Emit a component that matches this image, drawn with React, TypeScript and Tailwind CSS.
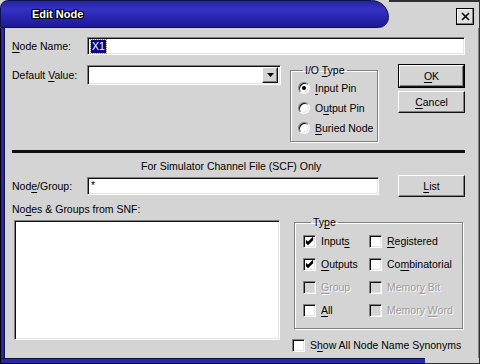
import type { ReactNode } from "react";

const sunken =
  "border border-t-[#808080] border-l-[#808080] border-r-white border-b-white shadow-[inset_1px_1px_0_#101010,inset_-1px_-1px_0_#e4e4e4]";
const raised =
  "border border-t-white border-l-white border-r-[#101010] border-b-[#101010] shadow-[inset_-1px_-1px_0_#808080]";
const disabledText = "text-[#9a9a9a] [text-shadow:1px_1px_0_#ffffff]";

function U({ children }: { children: ReactNode }) {
  return <span className="underline underline-offset-[2px] decoration-1">{children}</span>;
}

function Radio({ checked, children }: { checked?: boolean; children: ReactNode }) {
  return (
    <div className="flex h-[20px] items-center whitespace-nowrap">
      <span className="flex h-[12px] w-[12px] shrink-0 items-center justify-center rounded-full border border-t-[#808080] border-l-[#808080] border-r-white border-b-white bg-white shadow-[inset_1px_1px_0_#101010,inset_-1px_-1px_0_#e4e4e4]">
        {checked ? <span className="h-[4px] w-[4px] rounded-full bg-black" /> : null}
      </span>
      <span className="ml-[5px]">{children}</span>
    </div>
  );
}

function Check({ checked, disabled, children }: { checked?: boolean; disabled?: boolean; children: ReactNode }) {
  return (
    <div className="flex h-[23px] items-center whitespace-nowrap">
      <span
        className={`flex h-[13px] w-[13px] shrink-0 items-center justify-center ${sunken} ${
          disabled ? "bg-[#d4d4d4]" : "bg-white"
        }`}
      >
        {checked ? (
          <svg width="9" height="9" viewBox="0 0 9 9">
            <path d="M1 3.5 L3 5.5 L8 0.5 M1 4.5 L3 6.5 L8 1.5 M1 5.5 L3 7.5 L8 2.5" stroke="#000" strokeWidth="1.1" fill="none" />
          </svg>
        ) : null}
      </span>
      <span className={`ml-[5px] ${disabled ? disabledText : ""}`}>{children}</span>
    </div>
  );
}

function Button({ children, isDefault, h }: { children: ReactNode; isDefault?: boolean; h: string }) {
  return (
    <div className={`w-[67px] ${h} ${isDefault ? "border border-black" : ""} bg-[#d4d4d4]`}>
      <div className={`flex h-full w-full items-center justify-center ${raised}`}>{children}</div>
    </div>
  );
}

export default function App() {
  return (
    <div className="flex h-[364px] w-[480px] flex-col bg-[#d4d4d4] font-['Liberation_Sans',Arial,sans-serif] text-[10.5px] leading-[13px] text-black">
      {/* title bar */}
      <div className="flex h-[28px] shrink-0">
        <div className="flex w-[389px] items-center rounded-tl-[9px] rounded-tr-[20px] rounded-br-[12px] border border-[#10104a] bg-[linear-gradient(#2622a0,#3632c4_30%,#2a26b4_60%,#1e1a94)] pl-[31px]">
          <span className="text-[11px] font-bold text-white [text-shadow:1px_0_0_#000,-1px_0_0_#000,0_1px_0_#000,0_-1px_0_#000,1px_1px_0_#000,-1px_-1px_0_#000,1px_-1px_0_#000,-1px_1px_0_#000]">
            Edit Node
          </span>
        </div>
        <div className="flex flex-1 items-start justify-end border-t-2 border-r border-[#303030] pr-[5px] pt-[6px]">
          <div className="flex h-[17px] w-[18px] items-center justify-center border border-black bg-[#e0e0e0] shadow-[inset_-1px_-1px_0_#808080,inset_1px_1px_0_#ffffff]">
            <svg width="9" height="9" viewBox="0 0 9 9">
              <path d="M1 1 L8 8 M8 1 L1 8" stroke="#000" strokeWidth="1.6" />
            </svg>
          </div>
        </div>
      </div>

      {/* body */}
      <div className="flex flex-1">
        <div className="w-[5px] border-l border-r border-l-black border-r-[#101040] bg-[#2a26a8]" />
        <div className="flex flex-1 flex-col pl-[7px] pt-[9px]">
          {/* node name */}
          <div className="flex h-[18px] items-center">
            <span className="w-[75px]">
              <U>N</U>ode Name:
            </span>
            <div className={`flex h-[18px] w-[378px] items-center bg-white pl-[3px] ${sunken}`}>
              <span className="bg-[#0a0a80] px-[1px] text-white outline-1 outline-dotted outline-[#808080]">X1</span>
            </div>
          </div>

          {/* default value / io type / buttons */}
          <div className="mt-[9px] flex items-start">
            <div className="flex h-[22px] items-center">
              <span className="w-[75px]">
                Default <U>V</U>alue:
              </span>
              <div className={`flex h-[20px] w-[194px] items-center justify-end bg-white pr-[2px] ${sunken}`}>
                <div className={`flex h-[16px] w-[16px] items-center justify-center bg-[#d4d4d4] ${raised}`}>
                  <svg width="7" height="4" viewBox="0 0 7 4">
                    <path d="M0 0 H7 L3.5 4 Z" fill="#000" />
                  </svg>
                </div>
              </div>
            </div>
            <fieldset className="ml-[9px] h-[78px] w-[88px] border border-[#808080] pl-[7px] shadow-[1px_1px_0_#ffffff,inset_1px_1px_0_#ffffff]">
              <legend className="ml-[5px] px-[2px]">
                I/O <U>T</U>ype
              </legend>
              <div className="w-[76px] overflow-hidden pt-[1px]">
                <Radio checked>
                  <U>I</U>nput Pin
                </Radio>
                <Radio>
                  O<U>u</U>tput Pin
                </Radio>
                <Radio>
                  <U>B</U>uried Node
                </Radio>
              </div>
            </fieldset>
            <div className="ml-[20px] flex flex-col gap-[3px]">
              <Button isDefault h="h-[24px]">
                <U>O</U>K
              </Button>
              <Button h="h-[22px]">
                <U>C</U>ancel
              </Button>
            </div>
          </div>

          {/* separator */}
          <div className="mt-[8px] h-[3px] w-[453px] bg-[#101010]" />

          <div className="mt-[7px] h-[13px] pl-[129px]">For Simulator Channel File (SCF) Only</div>

          {/* node/group */}
          <div className="mt-[2px] flex h-[22px] items-center">
            <span className="w-[75px]">
              Nod<U>e</U>/Group:
            </span>
            <div className={`flex h-[18px] w-[292px] items-start bg-white pl-[3px] pt-[1px] ${sunken}`}>*</div>
            <div className="ml-[19px]">
              <Button h="h-[22px]">
                <U>L</U>ist
              </Button>
            </div>
          </div>

          <div className="mt-[6px] h-[13px]">
            No<U>d</U>es &amp; Groups from SNF:
          </div>

          {/* list and type */}
          <div className="flex items-start">
            <div className={`ml-[2px] mt-[4px] h-[120px] w-[266px] bg-white ${sunken}`} />
            <div className="ml-[14px] flex flex-col">
              <fieldset className="h-[113px] w-[169px] border border-[#808080] pl-[8px] shadow-[1px_1px_0_#ffffff,inset_1px_1px_0_#ffffff]">
                <legend className="ml-[8px] px-[2px]">
                  Ty<U>p</U>e
                </legend>
                <div className="grid grid-cols-[66px_1fr] pt-[1px]">
                  <Check checked>
                    Input<U>s</U>
                  </Check>
                  <Check>
                    <U>R</U>egistered
                  </Check>
                  <Check checked>
                    <U>O</U>utputs
                  </Check>
                  <Check>
                    Co<U>m</U>binatorial
                  </Check>
                  <Check disabled>
                    <U>G</U>roup
                  </Check>
                  <Check disabled>
                    Memor<U>y</U> Bit
                  </Check>
                  <Check>
                    <U>A</U>ll
                  </Check>
                  <Check disabled>
                    Memory <U>W</U>ord
                  </Check>
                </div>
              </fieldset>
              <div className="-ml-[2px] mt-[5px]">
                <Check>
                  S<U>h</U>ow All Node Name Synonyms
                </Check>
              </div>
            </div>
          </div>
        </div>
        <div className="w-[5px] border-r border-r-[#303030] shadow-[inset_-1px_0_0_#808080]" />
      </div>

      {/* bottom frame */}
      <div className="flex h-[6px] shrink-0">
        <div className="w-[425px] border-t border-b border-l border-t-[#101040] border-b-black border-l-black bg-[#2a26a8]" />
        <div className="flex-1 border-b border-r border-[#303030]" />
      </div>
    </div>
  );
}
